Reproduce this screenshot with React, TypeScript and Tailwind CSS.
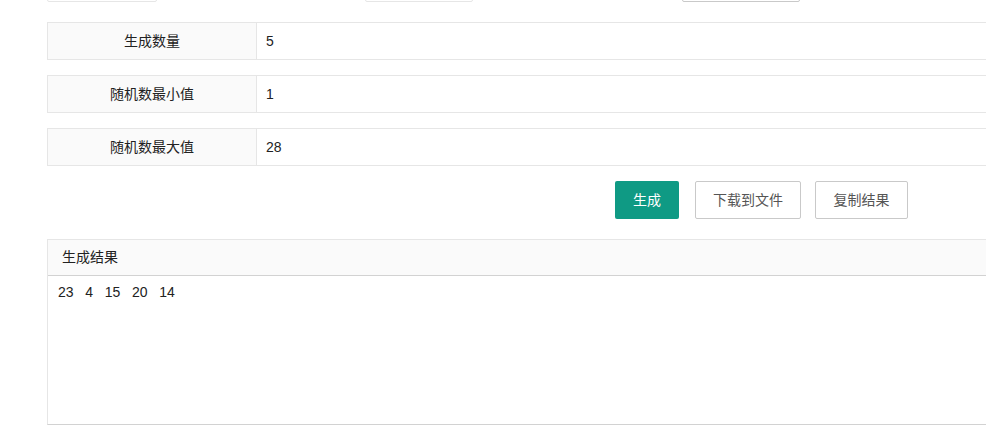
import React from 'react';

const FONT = { fontFamily: '"Liberation Sans", "Noto Sans CJK SC", sans-serif' };

const ROWS = [
  { label: '生成数量', value: '5' },
  { label: '随机数最小值', value: '1' },
  { label: '随机数最大值', value: '28' },
];

const FormRow = ({ label, value }: { label: string; value: string }) => (
  <div className="flex h-[38px] border border-[#e6e6e6] bg-white">
    <div className="w-[209px] shrink-0 bg-[#fafafa] border-r border-[#e6e6e6] flex items-center justify-center text-[14px] text-[#222]">
      {label}
    </div>
    <div className="flex-1 flex items-center pl-[9px] text-[14px] text-[#222]">{value}</div>
  </div>
);

export default function App() {
  return (
    <div className="w-[986px] h-[429px] overflow-hidden bg-white" style={FONT}>
      <div className="w-[1100px] pl-[47px]">
        {/* cut-off selects at the top */}
        <div className="flex mt-[-36px] h-[38px]">
          <div className="w-[110px] h-[38px] border border-[#e6e6e6] rounded-[2px]" />
          <div className="w-[108px] h-[38px] ml-[208px] border border-[#e6e6e6] rounded-[2px]" />
          <div className="w-[118px] h-[38px] ml-[209px] border border-[#c9c9c9] rounded-[2px]" />
        </div>

        <div className="mt-[20px] flex flex-col gap-[15px]">
          {ROWS.map((r) => (
            <FormRow key={r.label} label={r.label} value={r.value} />
          ))}
        </div>

        <div className="flex mt-[15px] ml-[568px] gap-[16px]">
          <button className="h-[38px] w-[64px] bg-[#0f9a84] text-white text-[14px] rounded-[2px]">生成</button>
          <button className="h-[38px] w-[106px] bg-white border border-[#c9c9c9] text-[#555] text-[14px] rounded-[2px]">
            下载到文件
          </button>
          <button className="h-[38px] w-[93px] -ml-[2px] bg-white border border-[#c9c9c9] text-[#555] text-[14px] rounded-[2px]">
            复制结果
          </button>
        </div>

        <div className="mt-[20px] border border-[#e6e6e6] border-b-[#d2d2d2]">
          <div className="h-[36px] bg-[#fafafa] border-b border-[#d2d2d2] flex items-center pl-[14px] text-[14px] text-[#222]">
            生成结果
          </div>
          <div className="h-[148px] px-[10px] pt-[6px] text-[14px] text-[#222] leading-[20px] whitespace-pre">
            {'23   4   15   20   14'}
          </div>
        </div>
      </div>
    </div>
  );
}
